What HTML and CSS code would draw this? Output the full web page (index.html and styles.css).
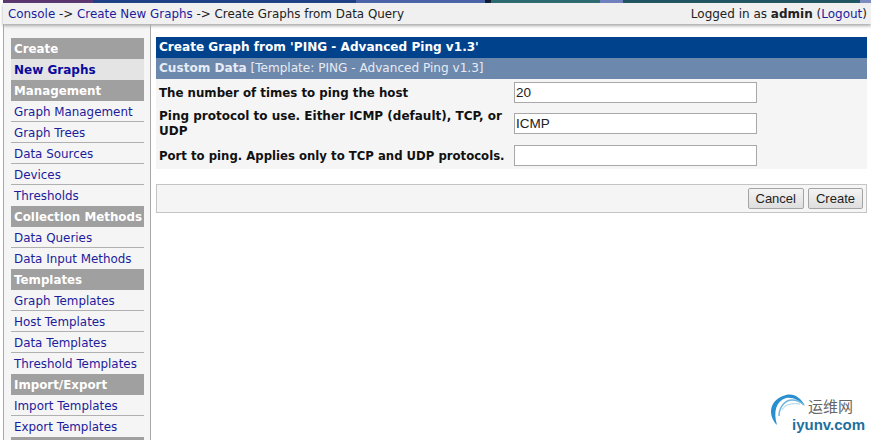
FILE: index.html
```html
<!DOCTYPE html>
<html lang="en">
<head>
    <meta charset="UTF-8">
    <meta name="viewport" content="width=device-width, initial-scale=1.0">
    <title>Create Graphs from Data Query</title>
    <link rel="stylesheet" href="styles.css">
</head>
<body>
    <div class="page">
        <div class="top-strip"></div>
        <div class="nav-bar">
            <div class="breadcrumb">
                <a href="#">Console</a> -&gt; <a href="#">Create New Graphs</a> -&gt; Create Graphs from Data Query
            </div>
            <div class="login-info">
                Logged in as <b>admin</b> (<a href="#">Logout</a>)
            </div>
        </div>
        <div class="columns">
            <ul class="side-menu">
                <li class="menu-head">Create</li>
                <li class="menu-active"><a href="#">New Graphs</a></li>
                <li class="menu-head">Management</li>
                <li class="menu-item"><a href="#">Graph Management</a></li>
                <li class="menu-item"><a href="#">Graph Trees</a></li>
                <li class="menu-item"><a href="#">Data Sources</a></li>
                <li class="menu-item"><a href="#">Devices</a></li>
                <li class="menu-item"><a href="#">Thresholds</a></li>
                <li class="menu-head">Collection Methods</li>
                <li class="menu-item"><a href="#">Data Queries</a></li>
                <li class="menu-item"><a href="#">Data Input Methods</a></li>
                <li class="menu-head">Templates</li>
                <li class="menu-item"><a href="#">Graph Templates</a></li>
                <li class="menu-item"><a href="#">Host Templates</a></li>
                <li class="menu-item"><a href="#">Data Templates</a></li>
                <li class="menu-item"><a href="#">Threshold Templates</a></li>
                <li class="menu-head">Import/Export</li>
                <li class="menu-item"><a href="#">Import Templates</a></li>
                <li class="menu-item"><a href="#">Export Templates</a></li>
                <li class="menu-head"></li>
            </ul>
            <main class="content">
                <div class="title-bar">Create Graph from 'PING - Advanced Ping v1.3'</div>
                <div class="sub-bar"><b>Custom Data</b> [Template: PING - Advanced Ping v1.3]</div>
                <div class="form-rows">
                    <div class="form-row">
                        <label class="form-label form-label-wide">The number of times to ping the host</label>
                        <input class="form-input" type="text" value="20">
                    </div>
                    <div class="form-row form-row-tall">
                        <label class="form-label">Ping protocol to use. Either ICMP (default), TCP, or UDP</label>
                        <input class="form-input" type="text" value="ICMP">
                    </div>
                    <div class="form-row">
                        <label class="form-label">Port to ping. Applies only to TCP and UDP protocols.</label>
                        <input class="form-input" type="text" value="">
                    </div>
                </div>
                <div class="action-bar">
                    <button class="action-button">Cancel</button>
                    <button class="action-button">Create</button>
                </div>
            </main>
        </div>
    </div>
    <div class="watermark">
        <svg class="watermark-logo" width="44" height="44" viewBox="0 0 44 44">
            <path d="M9 33 C0 24 0 8 18 3 C26 1 33 6 37 14 C31 8 25 5 18 6 C8 9 5 20 9 33 Z" fill="#2a8fcf"/>
            <path d="M11 24 C11 14 18 8 24 8 C29 8 33 10 36 13" fill="none" stroke="#6fb5de" stroke-width="1.5"/>
            <path d="M14 18 C17 12 24 11 32 12" fill="none" stroke="#a5d2ec" stroke-width="1"/>
        </svg>
        <div class="watermark-text">
            <span class="watermark-cn">运维网</span>
            <span class="watermark-en">iyunv.com</span>
        </div>
    </div>
</body>
</html>
```
FILE: styles.css
```css
* {
  box-sizing: border-box;
}

html,
body {
  margin: 0;
  height: 100%;
  overflow: hidden;
  background: #fff;
}

body {
  font-family: "DejaVu Sans", Verdana, sans-serif;
  font-size: 12px;
  color: #000;
}

a {
  color: #1c1c9c;
  text-decoration: none;
}

.page {
  height: 440px;
  padding-left: 3px;
}

.top-strip {
  height: 3px;
  background: linear-gradient(90deg,
    #5b3570 0 90px,
    #1d3f86 90px 353px,
    #4a62a8 353px 482px,
    #101c30 482px 488px,
    #2c6a70 488px 597px,
    #6f80c0 597px 620px,
    #1f5560 620px 857px,
    #7c8cc0 857px);
}

.nav-bar {
  position: relative;
  display: flex;
  justify-content: space-between;
  align-items: center;
  height: 21px;
  padding: 0 4px 0 5px;
  background: #f0f0f0;
  box-shadow: 0 2px 3px #aaa;
  font-size: 11.9px;
  color: #222;
}

.login-info {
  font-size: 12px;
}

.columns {
  display: flex;
  height: 416px;
}

.side-menu {
  width: 148px;
  margin: 0;
  padding: 14px 6px 0 7px;
  list-style: none;
  background: #f5f5f5;
  border-left: 1px solid #a8a8a8;
  border-right: 1px solid #a8a8a8;
  overflow: hidden;
}

.menu-head {
  height: 21px;
  padding-left: 3px;
  line-height: 22px;
  font-weight: bold;
  font-size: 11.85px;
  color: #fff;
  background: #a0a0a0;
}

.menu-active {
  height: 21px;
  padding-left: 3px;
  line-height: 22px;
  font-weight: bold;
  background: #e4e4e4;
}

.menu-active a {
  color: #0a0a9c;
}

.menu-item {
  height: 21px;
  padding-left: 3px;
  line-height: 22px;
  font-size: 11.9px;
  border-bottom: 1px solid #b0b0b0;
}

.menu-item:has(+ .menu-head) {
  border-bottom: none;
}

.content {
  width: 716px;
  padding: 13px 0 0 5px;
}

.title-bar {
  height: 21px;
  padding-left: 3px;
  line-height: 21px;
  font-weight: bold;
  font-size: 12.08px;
  color: #fff;
  background: #00438c;
}

.sub-bar {
  height: 21px;
  padding-left: 3px;
  line-height: 21px;
  font-size: 12.08px;
  color: #e6ecf4;
  background: #6d88ad;
}

.form-rows {
  display: flex;
  flex-direction: column;
  gap: 5px;
  padding: 3px 0;
  background: #f5f5f5;
}

.form-row {
  display: flex;
  align-items: center;
  min-height: 21px;
  padding-left: 3px;
}

.form-row-tall {
  min-height: 32px;
  padding-bottom: 1px;
}

.form-label {
  width: 355px;
  padding-top: 2px;
  font-weight: bold;
  font-size: 11.7px;
  line-height: 15px;
  color: #111;
}

.form-label-wide {
  font-size: 11.8px;
}

.form-row-tall .form-label {
  padding-top: 1px;
  font-size: 12px;
}

.form-input {
  width: 243px;
  height: 21px;
  padding: 0 1px;
  border: 1px solid #a8a8a8;
  background: #fff;
  font-family: "Liberation Sans", Arial, sans-serif;
  font-size: 13.5px;
  color: #222;
}

.action-bar {
  display: flex;
  justify-content: flex-end;
  align-items: center;
  gap: 4px;
  height: 29px;
  margin-top: 15px;
  padding-right: 3px;
  background: #f5f5f5;
  border: 1px solid #c4c4c4;
}

.action-button {
  height: 21px;
  padding: 0 7px;
  border: 1px solid #a4a4a4;
  border-radius: 2px;
  background: linear-gradient(#f4f4f4, #dedede);
  font-family: "Liberation Sans", Arial, sans-serif;
  font-size: 13px;
  color: #222;
}

.watermark {
  position: absolute;
  left: 768px;
  top: 392px;
  width: 100px;
  height: 44px;
  padding-left: 24px;
}

.watermark-logo {
  position: absolute;
  left: 0;
  top: 0;
}

.watermark-text {
  display: flex;
  flex-direction: column;
  padding-top: 4px;
}

.watermark-cn {
  margin-left: 16px;
  font-family: "Noto Sans CJK SC", sans-serif;
  font-size: 15px;
  line-height: 20px;
  color: #666;
}

.watermark-en {
  font-family: "Liberation Sans", Arial, sans-serif;
  font-size: 15px;
  font-weight: bold;
  line-height: 17px;
  color: #1f6f9e;
}
```
